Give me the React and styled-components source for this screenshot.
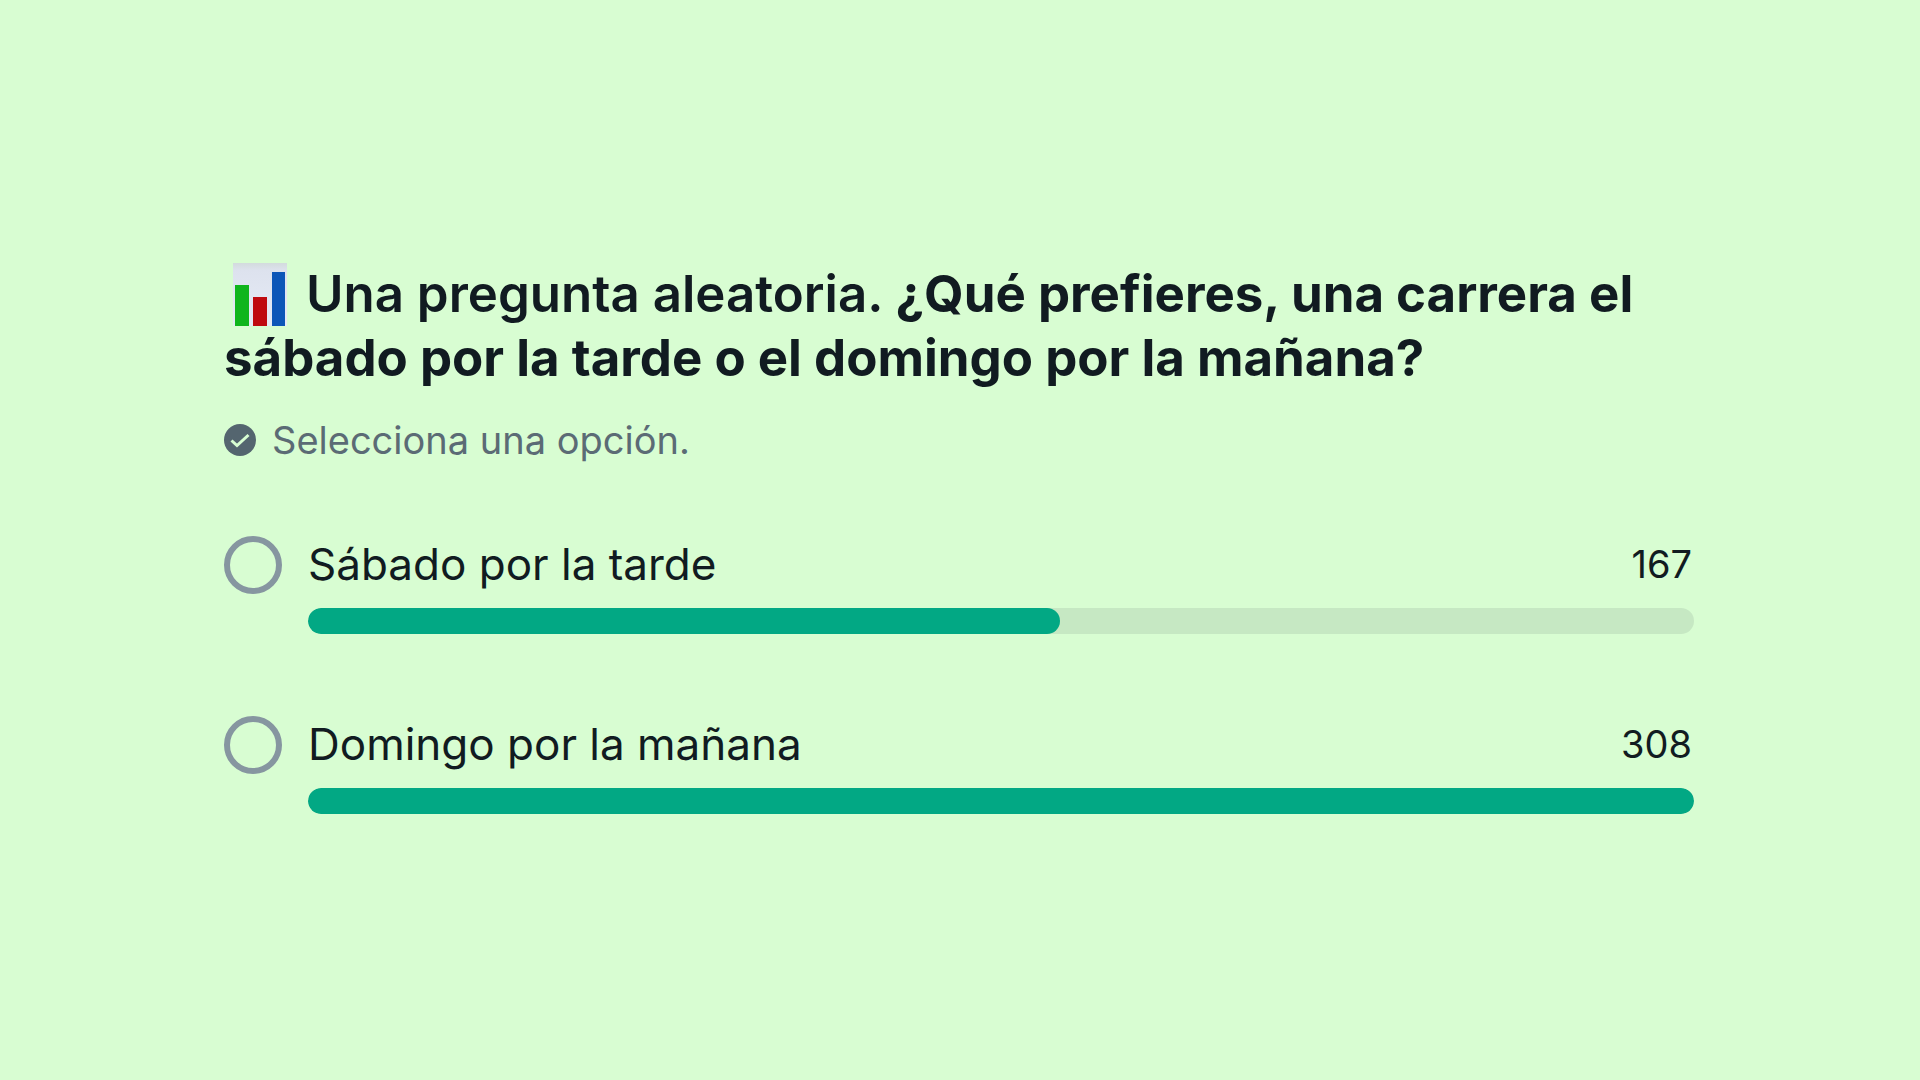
import React, { useState } from "react";
import styled, { createGlobalStyle } from "styled-components";

const GlobalStyle = createGlobalStyle`
  *, *::before, *::after { box-sizing: border-box; }
  body {
    margin: 0;
    background: #d8fdd2;
    color: #111b21;
    font-family: Inter, Roboto, sans-serif;
  }
`;

const Page = styled.main`
  display: flex;
  align-items: center;
  justify-content: center;
  min-height: 100vh;
  padding: 40px 42px 44px 40px;
`;

const Poll = styled.form`
  width: 100%;
  max-width: 1470px;
`;

const Question = styled.h1`
  margin: 0;
  font-size: 51px;
  line-height: 64px;
  font-weight: 700;
`;

const Intro = styled.span`
  font-weight: 600;
`;

const ChartIcon = styled.svg`
  width: 56px;
  height: 64px;
  margin: 0 18px 0 8px;
  vertical-align: bottom;
`;

const Hint = styled.p`
  display: flex;
  align-items: center;
  gap: 16px;
  margin: 24px 0 0;
  color: #5b6b75;
  font-size: 38px;
  line-height: 52px;
`;

const CheckIcon = styled.svg`
  width: 32px;
  height: 32px;
`;

const Options = styled.div`
  display: grid;
  gap: 82px;
  margin-top: 70px;
`;

const Option = styled.div`
  display: grid;
  grid-template-columns: 58px 1fr;
  column-gap: 26px;
`;

const Radio = styled.input`
  appearance: none;
  width: 58px;
  height: 58px;
  margin: 0;
  border: 6px solid #8696a0;
  border-radius: 50%;
  cursor: pointer;

  &:checked {
    border-color: #02a884;
    background: radial-gradient(#02a884 50%, transparent 52%);
  }
`;

const OptionBody = styled.div`
  display: grid;
  row-gap: 16px;
`;

const OptionHead = styled.div`
  display: flex;
  align-items: center;
  justify-content: space-between;
  padding-right: 2px;
  line-height: 56px;
`;

const OptionLabel = styled.label`
  font-size: 44px;
  cursor: pointer;
`;

const Votes = styled.span`
  font-size: 38px;
`;

const Track = styled.div`
  height: 26px;
  overflow: hidden;
  border-radius: 13px;
  background: #c6e8c3;
`;

const Fill = styled.div`
  height: 100%;
  border-radius: 13px;
  background: #02a884;
`;

const options = [
  { id: "sabado", label: "Sábado por la tarde", votes: 167 },
  { id: "domingo", label: "Domingo por la mañana", votes: 308 },
];

const maxVotes = Math.max(...options.map((o) => o.votes));

export default function App() {
  const [selected, setSelected] = useState(null);

  return (
    <Page>
      <GlobalStyle />
      <Poll>
        <Question>
          <ChartIcon viewBox="0 0 56 64" aria-hidden="true">
            <defs>
              <linearGradient id="paper" x1="0" y1="0" x2="0" y2="1">
                <stop offset="0" stopColor="#d3dbdd" />
                <stop offset="0.12" stopColor="#dde2ee" />
                <stop offset="1" stopColor="#e6ebf6" />
              </linearGradient>
            </defs>
            <rect x="1" y="1" width="54" height="63" fill="url(#paper)" />
            <rect x="3" y="23" width="14" height="41" fill="#0fb51c" />
            <rect x="21" y="35" width="14" height="29" fill="#bf0a10" />
            <rect x="40" y="10" width="13" height="54" fill="#0c56b8" />
          </ChartIcon>
          <Intro>Una pregunta aleatoria.</Intro> ¿Qué prefieres, una carrera el
          sábado por la tarde o el domingo por la mañana?
        </Question>
        <Hint>
          <CheckIcon viewBox="0 0 32 32" aria-hidden="true">
            <circle cx="16" cy="16" r="16" fill="#54656f" />
            <path d="M7.5 16.5l5.5 5L24.5 11" fill="none" stroke="#d8fdd2" strokeWidth="3" />
          </CheckIcon>
          Selecciona una opción.
        </Hint>
        <Options>
          {options.map(({ id, label, votes }) => (
            <Option key={id}>
              <Radio
                type="radio"
                name="poll"
                id={id}
                checked={selected === id}
                onChange={() => setSelected(id)}
              />
              <OptionBody>
                <OptionHead>
                  <OptionLabel htmlFor={id}>{label}</OptionLabel>
                  <Votes>{votes}</Votes>
                </OptionHead>
                <Track>
                  <Fill style={{ width: `${(votes / maxVotes) * 100}%` }} />
                </Track>
              </OptionBody>
            </Option>
          ))}
        </Options>
      </Poll>
    </Page>
  );
}
